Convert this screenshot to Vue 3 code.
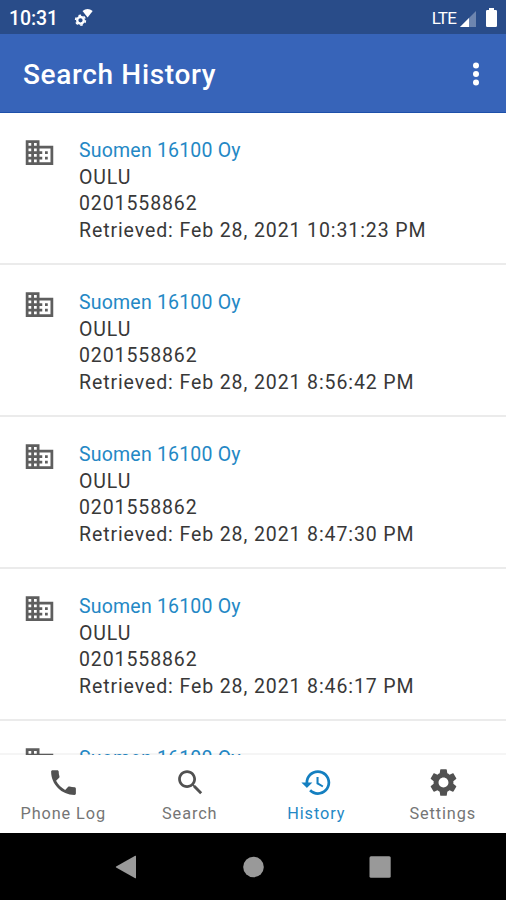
<script setup>
const entries = [
  '10:31:23 PM',
  '8:56:42 PM',
  '8:47:30 PM',
  '8:46:17 PM',
  '8:45:02 PM',
]
const tabs = [
  {
    name: 'Phone Log',
    cls: 'phone',
    d: 'M6.62 10.79c1.44 2.83 3.76 5.14 6.59 6.59l2.2-2.2c.27-.27.67-.36 1.02-.24 1.12.37 2.33.57 3.57.57.55 0 1 .45 1 1V20c0 .55-.45 1-1 1-9.39 0-17-7.61-17-17 0-.55.45-1 1-1h3.5c.55 0 1 .45 1 1 0 1.25.2 2.45.57 3.57.11.35.03.74-.25 1.02l-2.2 2.2z',
  },
  {
    name: 'Search',
    cls: 'search',
    d: 'M15.5 14h-.79l-.28-.27C15.41 12.59 16 11.11 16 9.5 16 5.91 13.09 3 9.5 3S3 5.91 3 9.5 5.91 16 9.5 16c1.61 0 3.09-.59 4.23-1.57l.27.28v.79l5 4.99L20.49 19l-4.99-5zm-6 0C7.01 14 5 11.99 5 9.5S7.01 5 9.5 5 14 7.01 14 9.5 11.99 14 9.5 14z',
  },
  {
    name: 'History',
    cls: 'history',
    active: true,
    d: 'M13 3c-4.97 0-9 4.03-9 9H1l3.89 3.89.07.14L9 12H6c0-3.87 3.13-7 7-7s7 3.13 7 7-3.13 7-7 7c-1.93 0-3.68-.79-4.94-2.06l-1.42 1.42C8.27 19.99 10.51 21 13 21c4.97 0 9-4.03 9-9s-4.03-9-9-9zm-1 5v5l4.28 2.54.72-1.21-3.5-2.08V8H12z',
  },
  {
    name: 'Settings',
    cls: 'settings',
    d: 'M19.14 12.94c.04-.3.06-.61.06-.94 0-.32-.02-.64-.07-.94l2.03-1.58c.18-.14.23-.41.12-.61l-1.92-3.32c-.12-.22-.37-.29-.59-.22l-2.39.96c-.5-.38-1.03-.7-1.62-.94l-.36-2.54c-.04-.24-.24-.41-.48-.41h-3.84c-.24 0-.43.17-.47.41l-.36 2.54c-.59.24-1.13.57-1.62.94l-2.39-.96c-.22-.08-.47 0-.59.22L2.74 8.87c-.12.21-.08.47.12.61l2.03 1.58c-.05.3-.09.63-.09.94s.02.64.07.94l-2.03 1.58c-.18.14-.23.41-.12.61l1.92 3.32c.12.22.37.29.59.22l2.39-.96c.5.38 1.03.7 1.62.94l.36 2.54c.05.24.24.41.48.41h3.84c.24 0 .44-.17.47-.41l.36-2.54c.59-.24 1.13-.56 1.62-.94l2.39.96c.22.08.47 0 .59-.22l1.92-3.32c.12-.22.07-.47-.12-.61l-2.01-1.58zM12 15.6c-1.98 0-3.6-1.62-3.6-3.6s1.62-3.6 3.6-3.6 3.6 1.62 3.6 3.6-1.62 3.6-3.6 3.6z',
  },
]
</script>

<template>
  <div class="screen">
    <div class="status">
      <span class="clock">10:31</span>
      <svg class="sys" viewBox="0 0 20 20">
        <path d="M8.500 3Q13.500 -1 18.700 3L13.600 9.500z" fill="#fff" />
        <circle cx="6.500" cy="12.300" r="3.300" fill="none" stroke="#fff" stroke-width="2.300" />
        <circle cx="6.500" cy="12.300" r="4.900" fill="none" stroke="#fff" stroke-width="1.600" stroke-dasharray="2.565 2.565" />
      </svg>
      <span class="lte">LTE</span>
      <svg class="signal" viewBox="0 0 16 16">
        <path d="M16 0v16H0z" fill="#fff" opacity=".32" />
        <path d="M9 7v9H0z" fill="#fff" />
      </svg>
      <svg class="battery" viewBox="0 0 11 19">
        <path d="M3 0h5v2h1.800Q11 2 11 3.300v14.400Q11 19 9.700 19H1.300Q0 19 0 17.700V3.300Q0 2 1.200 2H3z" fill="#fff" />
      </svg>
    </div>
    <header class="appbar">
      <h1>Search History</h1>
      <svg class="more" viewBox="0 0 8 26">
        <circle cx="4" cy="4.500" r="3" />
        <circle cx="4" cy="13" r="3" />
        <circle cx="4" cy="21.500" r="3" />
      </svg>
    </header>
    <main class="list">
      <article v-for="time in entries" :key="time" class="entry">
        <svg class="building" viewBox="0 0 24 24">
          <path d="M12 7V3H2v18h20V7H12zM6 19H4v-2h2v2zm0-4H4v-2h2v2zm0-4H4V9h2v2zm0-4H4V5h2v2zm4 12H8v-2h2v2zm0-4H8v-2h2v2zm0-4H8V9h2v2zm0-4H8V5h2v2zm10 12h-8v-2h2v-2h-2v-2h2v-2h-2V9h8v10zm-2-8h-2v2h2v-2zm0 4h-2v2h2v-2z" />
        </svg>
        <div class="lines">
          <div class="name">Suomen 16100 Oy</div>
          <div>OULU</div>
          <div>0201558862</div>
          <div>Retrieved: Feb 28, 2021 {{ time }}</div>
        </div>
      </article>
    </main>
    <nav class="tabs">
      <div v-for="tab in tabs" :key="tab.name" class="tab" :class="[tab.cls, { active: tab.active }]">
        <svg viewBox="0 0 24 24"><path :d="tab.d" /></svg>
        <span>{{ tab.name }}</span>
      </div>
    </nav>
    <div class="sysnav">
      <svg viewBox="0 0 24 24"><path d="M22 1.200v21.600q0 .8-.8.4L2.100 12.500q-.7-.5 0-1L21.200.8q.8-.4.8.4z" /></svg>
      <svg viewBox="0 0 24 24"><circle cx="12.500" cy="12" r="10.300" /></svg>
      <svg viewBox="0 0 24 24"><rect x="1.500" y="1.200" width="21.200" height="21.600" rx="1.500" /></svg>
    </div>
  </div>
</template>

<style>
body {
  margin: 0;
}
</style>

<style scoped>
.screen {
  width: 506px;
  height: 900px;
  display: flex;
  flex-direction: column;
  overflow: hidden;
  background: #fff;
  font-family: Roboto, sans-serif;
}
.status {
  flex: none;
  height: 34px;
  box-sizing: border-box;
  padding: 0 8px 0 9px;
  display: flex;
  align-items: center;
  background: #294c89;
  color: #fff;
}
.clock {
  width: 65px;
  font-size: 19.5px;
  font-weight: 500;
  letter-spacing: -0.1px;
  padding-top: 3px;
}
.sys {
  width: 20px;
  height: 20px;
  margin-top: 1px;
}
.lte {
  margin-left: auto;
  font-size: 17px;
  letter-spacing: -0.8px;
  padding-top: 1px;
}
.signal {
  width: 16px;
  height: 16px;
  margin: 3px 0 0 4px;
}
.battery {
  width: 11px;
  height: 19px;
  margin: 1px 1px 0 10px;
}
.appbar {
  flex: none;
  height: 79px;
  box-sizing: border-box;
  padding: 2px 26px 0 23px;
  display: flex;
  align-items: center;
  justify-content: space-between;
  background: #3764b9;
  border-bottom: 1px solid #1d50aa;
  color: #fff;
}
h1 {
  margin: 2px 0 0;
  font-size: 28px;
  line-height: 32px;
  font-weight: 500;
  letter-spacing: 0.65px;
}
.more {
  width: 8px;
  height: 26px;
  fill: #fff;
}
.list {
  flex: none;
  height: 642px;
  overflow: hidden;
}
.entry {
  height: 152px;
  box-sizing: border-box;
  padding: 23px 0 0 23px;
  display: flex;
  border-bottom: 2px solid #ebebeb;
}
.building {
  flex: none;
  width: 33px;
  height: 33px;
  margin-right: 23px;
  fill: #5e5e5e;
}
.lines {
  padding-top: 2px;
  font-size: 19.5px;
  line-height: 26.7px;
  letter-spacing: 0.9px;
  color: #383838;
  white-space: nowrap;
}
.name {
  letter-spacing: 0.2px;
  color: #2488c5;
}
.tabs {
  flex: none;
  height: 80px;
  margin-top: -2px;
  box-sizing: border-box;
  padding-top: 11px;
  border-top: 2px solid rgba(0, 0, 0, 0.04);
  display: grid;
  grid-template-columns: repeat(4, 1fr);
  background: #fff;
  background-clip: padding-box;
}
.tab {
  display: flex;
  flex-direction: column;
  align-items: center;
  color: #757575;
  fill: #515151;
}
.tab svg {
  width: 33px;
  height: 33px;
  margin-left: 1px;
}
.tab span {
  margin-top: 5px;
  font-size: 16.3px;
  line-height: 20px;
  letter-spacing: 0.9px;
  white-space: nowrap;
}
.tab.active {
  color: #2488c5;
  fill: #147fc0;
}
.sysnav {
  flex: none;
  height: 67px;
  box-sizing: border-box;
  padding: 0 63px;
  display: grid;
  grid-template-columns: repeat(3, 1fr);
  place-items: center;
  background: #000;
  fill: #999;
}
.sysnav svg {
  width: 24px;
  height: 24px;
}
</style>
